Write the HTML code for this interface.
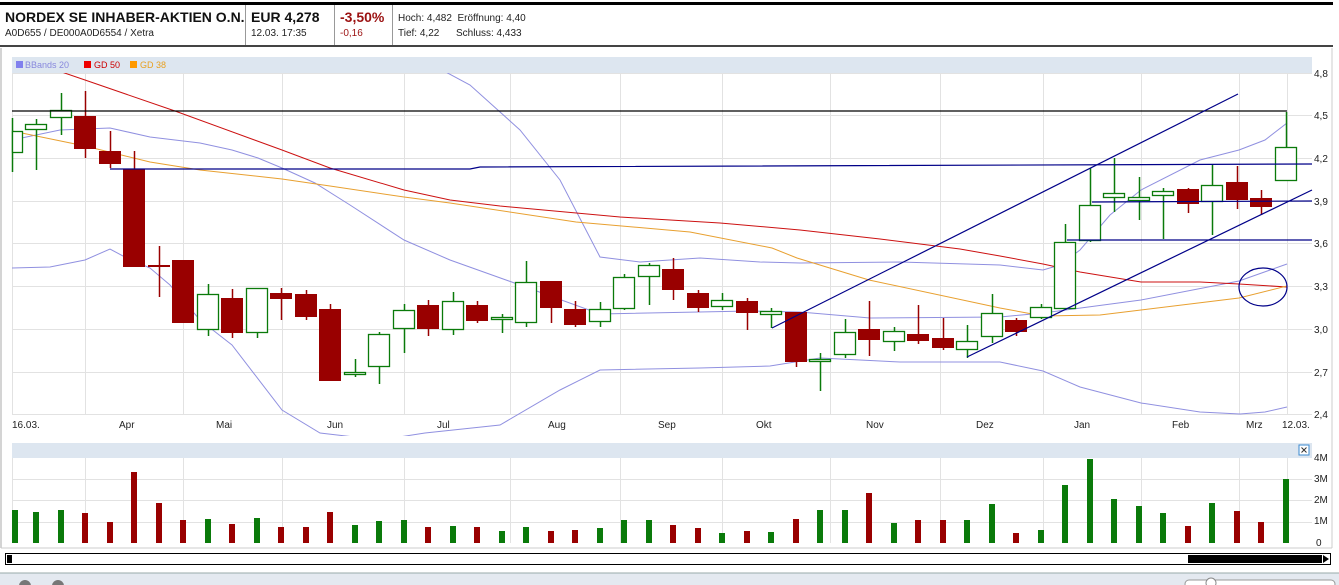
<!DOCTYPE html>
<html><head><meta charset="utf-8"><style>
body{margin:0;background:#fff;width:1339px;height:585px;overflow:hidden;font-family:"Liberation Sans",Arial,sans-serif;position:relative}
.a{position:absolute;white-space:nowrap}
</style></head><body>
<div class="a" style="left:0;top:2px;width:1333px;height:3px;background:#000"></div>
<div class="a" style="left:5px;top:9px;font-size:14px;font-weight:bold;color:#111">NORDEX SE INHABER-AKTIEN O.N.</div>
<div class="a" style="left:5px;top:28px;font-size:10px;color:#222">A0D655 / DE000A0D6554 / Xetra</div>
<div class="a" style="left:245px;top:5px;width:1px;height:40px;background:#999"></div>
<div class="a" style="left:251px;top:9px;font-size:14px;font-weight:bold;color:#111">EUR 4,278</div>
<div class="a" style="left:251px;top:28px;font-size:10px;color:#222">12.03. 17:35</div>
<div class="a" style="left:334px;top:5px;width:1px;height:40px;background:#999"></div>
<div class="a" style="left:340px;top:9px;font-size:14px;font-weight:bold;color:#9b1111">-3,50%</div>
<div class="a" style="left:340px;top:28px;font-size:10px;color:#9b1111">-0,16</div>
<div class="a" style="left:392px;top:5px;width:1px;height:40px;background:#999"></div>
<div class="a" style="left:398px;top:13px;font-size:10px;color:#222">Hoch: 4,482 &nbsp;Eröffnung: 4,40</div>
<div class="a" style="left:398px;top:28px;font-size:10px;color:#222">Tief: 4,22 &nbsp;&nbsp;&nbsp;&nbsp;&nbsp;Schluss: 4,433</div>
<div class="a" style="left:0;top:45px;width:1333px;height:2px;background:#444"></div>
<svg class="a" style="left:0;top:0" width="1339" height="585" xmlns="http://www.w3.org/2000/svg" id="s">
<line x1="1" y1="48" x2="1" y2="548" stroke="#aaa"/>
<line x1="1332" y1="48" x2="1332" y2="548" stroke="#ccc"/>
<line x1="1" y1="548" x2="1332" y2="548" stroke="#ccc"/>
<rect x="12" y="57" width="1300" height="16" fill="#dde6f0"/>
<rect x="16" y="61" width="7" height="7" fill="#8080ee"/><text x="25" y="68" font-size="9" fill="#8888dd">BBands 20</text>
<rect x="84" y="61" width="7" height="7" fill="#e00"/><text x="94" y="68" font-size="9" fill="#cc0000">GD 50</text>
<rect x="130" y="61" width="7" height="7" fill="#f90"/><text x="140" y="68" font-size="9" fill="#e8a020">GD 38</text>
<g id="grid" stroke="#e2e2e2" stroke-width="1"></g>
<g font-size="10" fill="#222">
<text x="1314" y="77">4,8</text><text x="1314" y="119">4,5</text><text x="1314" y="162">4,2</text><text x="1314" y="205">3,9</text><text x="1314" y="247">3,6</text><text x="1314" y="290">3,3</text><text x="1314" y="333">3,0</text><text x="1314" y="376">2,7</text><text x="1314" y="418">2,4</text>
<text x="12" y="428">16.03.</text><text x="119" y="428">Apr</text><text x="216" y="428">Mai</text><text x="327" y="428">Jun</text><text x="437" y="428">Jul</text><text x="548" y="428">Aug</text><text x="658" y="428">Sep</text><text x="756" y="428">Okt</text><text x="866" y="428">Nov</text><text x="976" y="428">Dez</text><text x="1074" y="428">Jan</text><text x="1172" y="428">Feb</text><text x="1246" y="428">Mrz</text><text x="1282" y="428">12.03.</text>
<text x="1314" y="461">4M</text><text x="1314" y="482">3M</text><text x="1314" y="503">2M</text><text x="1314" y="524">1M</text><text x="1316" y="546">0</text>
</g>
<rect x="12" y="443" width="1300" height="15" fill="#dde6f0"/>
<rect x="1299" y="445" width="10" height="10" fill="#fff" stroke="#3a8ad0"/>
<path d="M1301.5 447.5l5 5M1306.5 447.5l-5 5" stroke="#333" stroke-width="1"/>
<defs><clipPath id="c"><rect x="12" y="73" width="1300" height="363"/></clipPath></defs>
<g clip-path="url(#c)" fill="none">
<polyline stroke="#9090e0" points="427,62 470,85 520,130 560,180 600,257 640,262 700,258 760,262 800,263 900,262 1000,265 1043,270 1060,265 1080,250 1110,215 1141,190 1200,160 1239,150 1265,140 1287,123"/>
<polyline stroke="#9090e0" points="12,140 60,130 110,128 150,137 200,143 232,150 258,158 282,168 315,183 350,205 404,240 450,260 520,285 600,314 750,311 800,312 870,318 1000,317 1043,313 1141,300 1239,281 1287,264"/>
<polyline stroke="#9090e0" points="12,268 50,267 85,260 110,249 123,256 150,268 170,285 200,320 232,345 282,410 320,433 380,440 425,433 500,425 560,390 600,370 700,368 770,366 820,358 900,362 1000,362 1043,371 1080,387 1141,403 1200,412 1240,414 1265,412 1287,407"/>
<polyline stroke="#cc1111" points="12,55 85,80 175,111 282,150 330,168 404,190 450,200 500,206 620,217 720,223 800,230 880,239 960,249 1000,256 1043,264 1080,272 1141,282 1200,282 1239,284 1287,287"/>
<polyline stroke="#e8a030" points="12,131 85,146 150,162 200,170 282,179 330,186 404,197 450,203 576,222 690,232 772,248 797,258 869,280 1000,308 1043,316 1100,315 1141,310 1239,298 1287,286"/>
</g>
<g id="cand"></g>
<g fill="none" stroke="#000088" stroke-width="1.2">
<line x1="12" y1="111" x2="1287" y2="111" stroke="#000"/>
<polyline points="110,169 470,169 480,167 1312,164"/>
<line x1="1092" y1="202" x2="1312" y2="201"/>
<line x1="1067" y1="240" x2="1312" y2="240"/>
<line x1="772" y1="328" x2="1238" y2="94"/>
<line x1="967" y1="357" x2="1312" y2="190"/>
<ellipse cx="1263" cy="287" rx="24" ry="19"/>
</g>
<g id="vol"></g>
<rect x="5.5" y="553.5" width="1325" height="11" fill="#fff" stroke="#000"/>
<rect x="7" y="555" width="5" height="8" fill="#000"/>
<rect x="1188" y="555" width="134" height="8" fill="#000"/>
<path d="M1323 555l6 4-6 4z" fill="#000"/>
<rect x="0" y="573" width="1339" height="12" fill="#e4e9f0"/>
<line x1="0" y1="573" x2="1339" y2="573" stroke="#9aa"/>
<rect x="1185" y="580" width="150" height="8" rx="4" fill="#fff" stroke="#999"/>
<circle cx="1211" cy="583" r="5" fill="#fff" stroke="#888"/>
<circle cx="25" cy="586" r="6" fill="#777"/><circle cx="58" cy="586" r="6" fill="#777"/>
</svg>
<script>
var ns="http://www.w3.org/2000/svg";
function el(g,t,a){var e=document.createElementNS(ns,t);for(var k in a)e.setAttribute(k,a[k]);document.getElementById(g).appendChild(e);}
[73,115,158,201,243,286,329,372,414].forEach(function(y){el("grid","line",{x1:12,x2:1312,y1:y+.5,y2:y+.5});});
[479,500,522].forEach(function(y){el("grid","line",{x1:12,x2:1312,y1:y+.5,y2:y+.5});});
[12,85,183,282,404,510,620,722,830,940,1043,1141,1239,1287].forEach(function(x){el("grid","line",{x1:x+.5,x2:x+.5,y1:73,y2:415});el("grid","line",{x1:x+.5,x2:x+.5,y1:458,y2:543});});
var C=[
["g",131,152,118,172,510],["g",124,129,119,170,512],["g",110,117,93,135,510],["r",116,148,91,158,513],["r",151,163,131,168,522],
["r",169,266,151,266,472],["r",265,266,246,297,503],["r",260,322,260,322,520],["g",294,329,284,336,519],["r",298,332,289,338,524],
["g",288,332,288,338,518],["r",293,298,288,320,527],["r",294,316,290,320,527],["r",309,380,304,380,512],["g",372,374,359,377,525],
["g",334,366,332,384,521],["g",310,328,304,353,520],["r",305,328,300,336,527],["g",301,329,292,335,526],["r",305,320,301,323,527],
["g",317,319,314,333,531],["g",282,322,261,327,527],["r",281,307,281,323,531],["r",309,324,301,327,530],["g",309,321,302,327,528],
["g",277,308,274,310,520],["g",265,276,263,305,520],["r",269,289,258,300,525],["r",293,307,290,312,528],["g",300,306,293,310,533],
["r",301,312,298,330,531],["g",311,314,308,328,532],["r",312,361,312,367,519],["g",359,361,353,391,510],["g",332,354,319,358,510],
["r",329,339,301,356,493],["g",331,341,327,351,523],["r",334,340,305,344,520],["r",338,347,318,350,520],["g",341,349,325,358,520],
["g",313,336,294,343,504],["r",320,331,318,336,533],["g",307,317,304,319,530],["g",242,308,224,310,485],["g",205,240,168,242,459],
["g",193,197,158,212,499],["g",197,200,177,220,506],["g",191,195,188,239,513],["r",189,203,188,213,526],["g",185,201,164,235,503],
["r",182,199,166,209,511],["r",198,206,190,215,522],["g",147,180,112,180,479]];
C.forEach(function(c,i){var x=Math.round(36+(i-1)*24.5);var col=c[0]=="g"?"#0a7a0a":"#990000";
el("cand","line",{x1:x+.5,x2:x+.5,y1:c[3],y2:c[4],stroke:col,"stroke-width":1.5});
var l=Math.max(12,x-11),w=x+11-l,h=Math.max(1,c[2]-c[1]);
if(c[0]=="g")el("cand","rect",{x:l+.5,y:c[1]+.5,width:w-1,height:h,fill:"#fff",stroke:col,"stroke-width":1.3});
else el("cand","rect",{x:l,y:c[1],width:w,height:h+1,fill:col});
var vx=Math.max(12,x-3);el("vol","rect",{x:vx,y:c[5],width:6,height:543-c[5],fill:c[0]=="g"?"#0a7a0a":"#990000"});});
</script>
</body></html>
